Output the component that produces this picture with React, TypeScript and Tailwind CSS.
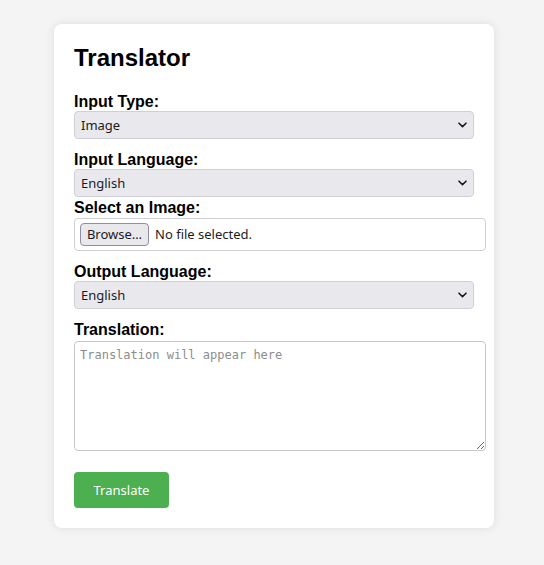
import React, { useState } from 'react';

const LANGUAGES = ['English', 'Spanish', 'French', 'German', 'Italian', 'Japanese', 'Chinese'];

const Chevron = () => (
    <svg
        className="pointer-events-none absolute right-[7px] top-1/2 -translate-y-1/2"
        width="9"
        height="6"
        viewBox="0 0 9 6"
        fill="none"
    >
        <path d="M1 1.2 L4.5 4.6 L8 1.2" stroke="#1b1b1f" strokeWidth="1.6" strokeLinecap="round" strokeLinejoin="round" />
    </svg>
);

interface SelectProps {
    value: string;
    options: string[];
    onChange: (v: string) => void;
}

const Select: React.FC<SelectProps> = ({ value, options, onChange }) => (
    <div className="relative h-7 w-[400px] shrink-0">
        <select
            value={value}
            onChange={(e) => onChange(e.target.value)}
            className="block h-7 w-full appearance-none rounded border border-[#cfcfd8] bg-[#e9e9ed] pt-[2px] pl-[6px] pr-6 font-['Noto_Sans',sans-serif] text-[13px] text-[#1b1b1f] outline-none"
        >
            {options.map(o => (
                <option key={o} value={o}>{o}</option>
            ))}
        </select>
        <Chevron />
    </div>
);

export default function App() {
    const [inputType, setInputType] = useState('Image');
    const [inputLang, setInputLang] = useState('English');
    const [outputLang, setOutputLang] = useState('English');

    const labelCls = "block font-['Liberation_Sans',Arial,sans-serif] text-base leading-[18px] font-bold text-black";

    return (
        <div className="min-h-screen bg-[#f4f4f4] pt-6 pl-[54px]">
            <div className="flex w-[440px] flex-col rounded-lg bg-white p-5 shadow-[0_0_10px_rgba(0,0,0,0.1)]">
                <h2 className="mb-[21px] font-['Liberation_Sans',Arial,sans-serif] text-2xl leading-7 font-bold text-black">
                    Translator
                </h2>

                <label className={labelCls}>Input Type:</label>
                <Select value={inputType} options={['Text', 'Image']} onChange={setInputType} />

                <label className={`${labelCls} mt-3`}>Input Language:</label>
                <Select value={inputLang} options={LANGUAGES} onChange={setInputLang} />

                <label className={`${labelCls} mt-[2px]`}>Select an Image:</label>
                <div className="mt-px flex h-[33px] w-[412px] shrink-0 items-center gap-[6px] rounded border border-[#cfcfd8] bg-white px-[5px]">
                    <button className="flex h-[23px] w-[69px] items-center justify-center rounded border border-[#8f8f9d] bg-[#e9e9ed] font-['Noto_Sans',sans-serif] text-[13px] text-[#1b1b1f]">
                        Browse…
                    </button>
                    <span className="font-['Noto_Sans',sans-serif] text-[13px] text-[#1b1b1f]">No file selected.</span>
                </div>

                <label className={`${labelCls} mt-3`}>Output Language:</label>
                <Select value={outputLang} options={LANGUAGES} onChange={setOutputLang} />

                <label className={`${labelCls} mt-3`}>Translation:</label>
                <textarea
                    readOnly
                    placeholder="Translation will appear here"
                    className="mt-[2px] block h-[110px] w-[412px] shrink-0 rounded border border-[#c8c8c8] px-[5px] pt-[6px] font-['DejaVu_Sans_Mono',monospace] text-[12px] leading-[15px] text-black outline-none placeholder:text-[#8d8d8d]"
                />

                <button className="mt-[21px] h-9 w-[95px] shrink-0 rounded bg-[#4caf50] pt-px font-['Noto_Sans',sans-serif] text-[13px] text-white">
                    Translate
                </button>
            </div>
        </div>
    );
}
